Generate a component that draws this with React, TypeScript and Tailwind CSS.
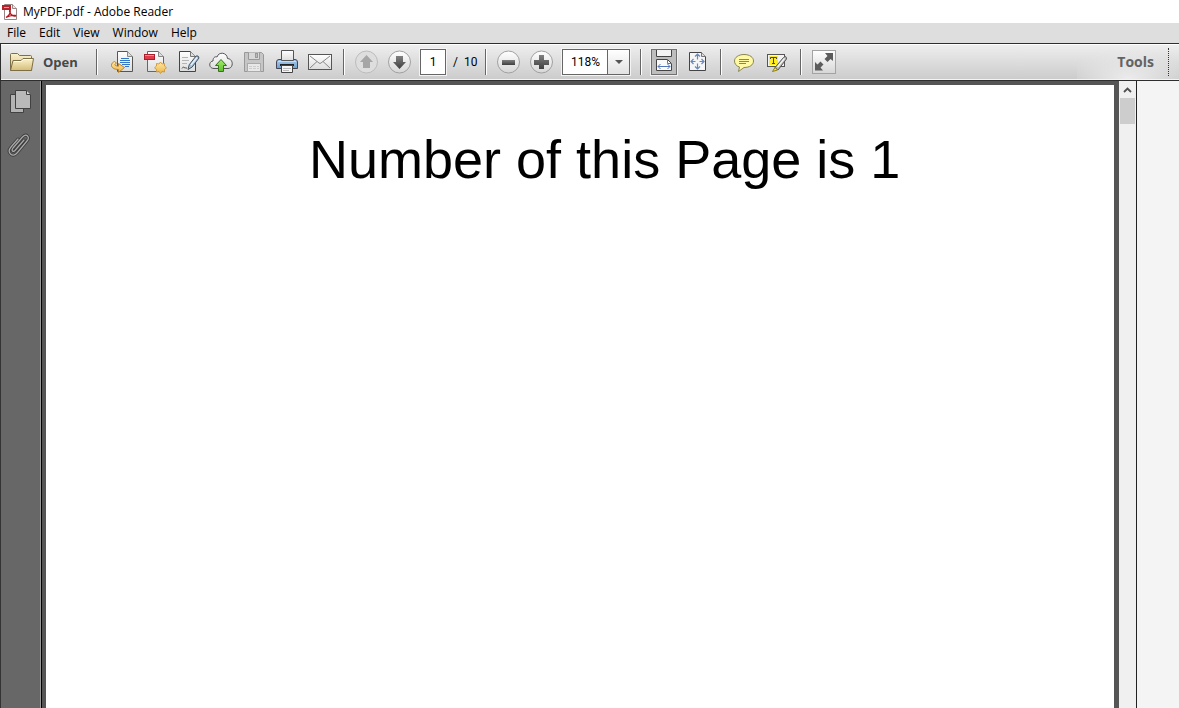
import type { ReactNode } from 'react';

function Svg({ children, size = 24 }: { children: ReactNode; size?: number }) {
  return (
    <svg width={size} height={size} viewBox={`0 0 ${size} ${size}`} fill="none" aria-hidden="true" className="shrink-0">
      {children}
    </svg>
  );
}

function Gradients() {
  return (
    <svg width="0" height="0" className="absolute" aria-hidden="true">
      <defs>
        <linearGradient id="paper" x1="0" y1="0" x2="0" y2="1">
          <stop offset="0" stopColor="#ffffff" />
          <stop offset="1" stopColor="#dcdcdc" />
        </linearGradient>
        <linearGradient id="folder" x1="0" y1="0" x2="0" y2="1">
          <stop offset="0" stopColor="#fbf2cd" />
          <stop offset="1" stopColor="#d5bd78" />
        </linearGradient>
        <linearGradient id="gold" x1="0" y1="0" x2="0" y2="1">
          <stop offset="0" stopColor="#ffe9a6" />
          <stop offset="1" stopColor="#ecb444" />
        </linearGradient>
        <linearGradient id="dark" x1="0" y1="0" x2="0" y2="1">
          <stop offset="0" stopColor="#808080" />
          <stop offset="1" stopColor="#3f3f3f" />
        </linearGradient>
        <linearGradient id="disc" x1="0" y1="0" x2="0" y2="1">
          <stop offset="0" stopColor="#ffffff" />
          <stop offset="1" stopColor="#d6d6d6" />
        </linearGradient>
        <linearGradient id="blue" x1="0" y1="0" x2="0" y2="1">
          <stop offset="0" stopColor="#a9cdee" />
          <stop offset="1" stopColor="#6f9fcd" />
        </linearGradient>
        <linearGradient id="green" x1="0" y1="0" x2="0" y2="1">
          <stop offset="0" stopColor="#a5ee6a" />
          <stop offset="1" stopColor="#5fbe32" />
        </linearGradient>
      </defs>
    </svg>
  );
}

const AppIcon = () => (
  <Svg size={16}>
    <path d="M2.500 .5H10.500L14.500 4.500V15.500H2.500Z" fill="#fff" stroke="#9a8585" />
    <path d="M10.500 .5V4.500H14.500" fill="#e8e8e8" stroke="#9a8585" />
    <rect x="0" y="1" width="9" height="5" fill="#b5222b" />
    <path d="M2 3.500H7" stroke="#e0a0a3" />
    <path d="M4 13.500C7 11.500 8.500 8.500 8.200 6.600C8 5.500 7 6.500 8 8.500C9 10.800 11 12.300 13.500 12C14.500 11.200 10 10.500 4 13.500Z" stroke="#b5161d" strokeWidth="1.300" />
  </Svg>
);

const FolderIcon = () => (
  <svg width="26" height="24" viewBox="0 0 26 24" fill="none" aria-hidden="true" className="shrink-0">
    <path d="M1.500 20.500V4.500Q1.500 3.500 2.500 3.500H8.500L10.500 5.500H21.500Q22.500 5.500 22.500 6.500V20.500Z" fill="url(#folder)" stroke="#7d7048" />
    <path d="M1.500 20.500L4 10.500H12L14 8.500H24.500L22.500 20.500Z" fill="url(#folder)" stroke="#7d7048" />
    <path d="M5 11.500H12.500L14.500 9.500H23" stroke="#fffbe6" />
  </svg>
);

const ConvertIcon = () => (
  <Svg>
    <path d="M7.500 1.500H17.500L22.500 6.500V21.500H7.500Z" fill="url(#paper)" stroke="#555" />
    <path d="M17.500 1.500V6.500H22.500" fill="#ddd" stroke="#888" />
    <path d="M11 8.500H19M10 10.500H20M10 12.500H20M12 14.500H20M15 16.500H19" stroke="#3576c4" />
    <path d="M4.500 11.500C-.5 13.500 .5 19.500 8.500 19.500V22.500L14.500 17.500L8.500 13.500V16.200C5 16 3.500 14.500 6.500 13Z" fill="url(#gold)" stroke="#b37c22" strokeWidth=".9" strokeLinejoin="round" />
  </Svg>
);

const CreateIcon = () => (
  <Svg>
    <path d="M4.500 1.500H15.500L20.500 6.500V21.500H4.500Z" fill="url(#paper)" stroke="#666" />
    <path d="M15.500 1.500V6.500H20.500" fill="#ddd" stroke="#888" />
    <rect x="1.500" y="4.500" width="10" height="5" fill="#e23a48" stroke="#a91c2b" />
    <path d="M2 5.500H11" stroke="#f48c93" />
    <path d="M17.500 12L19 14L21.500 13.500L21.500 16L23.500 17.800L21.500 19.500V22L19 21.600L17.500 23.500L16 21.600L13.500 22V19.500L11.500 17.800L13.500 16V13.500L16 14Z" fill="url(#gold)" stroke="#cf963a" strokeWidth=".9" strokeLinejoin="round" />
  </Svg>
);

const SignIcon = () => (
  <Svg>
    <path d="M3.500 1.500H14.500L19.500 6.500V21.500H3.500Z" fill="url(#paper)" stroke="#444" />
    <path d="M14.500 1.500V6.500H19.500" fill="#ddd" stroke="#777" />
    <path d="M6 7.500H12M6 10.500H13M6 13.500H11" stroke="#b5b5b5" />
    <path d="M6 18.500C7 16.500 8 16.500 8 18C9 17 9.500 18.500 11 18" stroke="#555" />
    <path d="M12 19.500L13.200 14.800L20 6Q22.500 5 23 8L16.200 17Z" fill="#a9c4dc" stroke="#45525f" strokeLinejoin="round" />
    <path d="M15 15L21 7.500" stroke="#e6f1fa" strokeWidth="1.300" />
  </Svg>
);

const CloudIcon = () => (
  <Svg>
    <path d="M5 18.500C-.5 18.500 -.5 11.500 4 11C4 6.500 7 6.500 8 7C9.500 1.500 18 2 18.500 8.500C25 9 24.500 18.500 19 18.500Z" fill="url(#paper)" stroke="#555" />
    <path d="M12 9.500L17.500 15.500H14.500V21.500H9.500V15.500H6.500Z" fill="url(#green)" stroke="#35751b" strokeLinejoin="round" />
  </Svg>
);

const SaveIcon = () => (
  <Svg>
    <path d="M2.500 2.500H19.500L21.500 4.500V21.500H2.500Z" fill="#c6c6c6" stroke="#999" />
    <path d="M6.500 2.500V9.500H17.500V2.500" fill="#d8d8d8" stroke="#999" />
    <rect x="13.500" y="3.500" width="2" height="4" fill="#bbb" stroke="#999" />
    <rect x="5.500" y="13.500" width="13" height="8" fill="#e8e8e8" stroke="#aaa" />
    <path d="M7 16.500H17M7 18.500H17" stroke="#ccc" strokeDasharray="3 1" />
  </Svg>
);

const PrintIcon = () => (
  <Svg>
    <path d="M1.500 18.500V12Q1.500 9.500 4 9.500H20Q22.500 9.500 22.500 12V18.500Z" fill="url(#blue)" stroke="#445" />
    <path d="M6.500 .5H18.500V10.500H6.500Z" fill="url(#paper)" stroke="#555" />
    <path d="M3 11.500H21" stroke="#c3def5" />
    <path d="M5 15H19" stroke="#222" strokeWidth="2" />
    <path d="M6.500 15.500H17.500V22.500H6.500Z" fill="#f5f5f5" stroke="#444" />
    <path d="M8 18.500H16M8 20.500H14" stroke="#bbb" />
  </Svg>
);

const MailIcon = () => (
  <Svg>
    <rect x=".5" y="4.500" width="23" height="15" fill="url(#paper)" stroke="#555" />
    <path d="M2 6L11 13Q12 14 13 13L22 6M2 18L9 11.500M22 18L15 11.500" stroke="#888" />
  </Svg>
);

const Disc = ({ children }: { children: ReactNode }) => (
  <Svg>
    <circle cx="11.500" cy="12" r="11" fill="url(#disc)" stroke="#a0a0a0" />
    {children}
  </Svg>
);

const UpIcon = () => (
  <Svg>
    <circle cx="11.500" cy="12" r="11" fill="#dedede" stroke="#bcbcbc" />
    <path d="M11.500 5L18 12H15V18H8V12H5Z" fill="#a6a6a6" />
  </Svg>
);

const FitWidthIcon = () => (
  <Svg>
    <path d="M4.500 0V6.500H19.500V0" fill="#f4f4f4" stroke="#444" />
    <path d="M4.500 20.500V9.500H15.500L19.500 13.500V20.500Z" fill="#fafafa" stroke="#444" />
    <path d="M15.500 9.500V13.500H19.500" stroke="#777" />
    <path d="M6 16.500H18M8.500 14L6 16.500L8.500 19M15.500 14L18 16.500L15.500 19" stroke="#5577b5" />
  </Svg>
);

const FitPageIcon = () => (
  <Svg>
    <path d="M3.500 2.500H15.500L19.500 6.500V20.500H3.500Z" fill="#f6f6f6" stroke="#444" />
    <path d="M15.500 2.500V6.500H19.500" fill="#ddd" stroke="#777" />
    <path d="M11.500 4V9.500M11.500 13.500V19M5 11.500H9.500M13.500 11.500H18M9 6.500L11.500 4L14 6.500M9 16.500L11.500 19L14 16.500M7.500 9L5 11.500L7.500 14M15.500 9L18 11.500L15.500 14" stroke="#6a88c0" strokeWidth="1.200" />
  </Svg>
);

const CommentIcon = () => (
  <Svg>
    <path d="M12 4.500C18 4.500 21.500 7.500 21.500 11C21.500 15 17.500 17.500 12 17.500L6.500 21.500L7.500 17C4 16 2.500 13.500 2.500 11C2.500 7.500 6.500 4.500 12 4.500Z" fill="#fff9a6" stroke="#8a8650" />
    <path d="M7 9.500H17M7 11.500H17M7 13.500H14" stroke="#8c874d" />
  </Svg>
);

const HighlightIcon = () => (
  <Svg>
    <rect x="2.500" y="4.500" width="17" height="12" fill="#f3f3f3" stroke="#555" />
    <rect x="4" y="6" width="9" height="9" fill="#ffed24" />
    <path d="M5.500 9V7.500H11.500V9M8.500 7.500V13.500M7 13.500H10" stroke="#444" />
    <path d="M10 17.500L18.500 7.500Q21.500 5 21.500 9L13 20Z" fill="#b9b9b5" stroke="#555" />
    <path d="M12.500 17L19.500 8.500" stroke="#f8f8f8" strokeWidth="1.200" />
    <path d="M7.500 21.500L10 17.500L12.500 20Z" fill="#ffed24" stroke="#8a7e20" />
  </Svg>
);

const FullScreenIcon = () => (
  <Svg>
    <rect x=".5" y=".5" width="23" height="23" fill="url(#disc)" stroke="#a3a3a3" />
    <path d="M13 3H21V11L18.500 9L15.500 12L12.500 9L15.500 6ZM3 12L5.500 14.500L8.500 11.500L11.500 14.500L8.500 17.500L11 20.500H3Z" fill="#5c5c5c" />
  </Svg>
);

function Tool({ label, children, disabled }: { label: string; children: ReactNode; disabled?: boolean }) {
  return (
    <button type="button" aria-label={label} disabled={disabled} className="flex h-[26px] w-[33px] shrink-0 items-center justify-center">
      {children}
    </button>
  );
}

const Separator = () => <span className="h-[26px] w-0.5 shrink-0 border-r border-l border-r-white border-l-[#666]" />;

export default function App() {
  return (
    <div className="flex h-screen flex-col overflow-hidden bg-[#505050] font-['Open_Sans',sans-serif] text-black">
      <Gradients />
      <header className="flex h-[23px] shrink-0 items-center gap-[5px] bg-white pl-0.5">
        <AppIcon />
        <h1 className="text-[12px] leading-4">MyPDF.pdf - Adobe Reader</h1>
      </header>

      <nav className="flex h-5 shrink-0 items-center gap-px bg-[#dedede] pl-px text-[12px] leading-4">
        {['File', 'Edit', 'View', 'Window', 'Help'].map((item) => (
          <button key={item} type="button" className="px-1.5">
            {item}
          </button>
        ))}
      </nav>

      <div className="flex h-[38px] shrink-0 items-center border-y border-l border-[#2e2e2e] bg-linear-to-b from-[#efefef] to-[#cbcbcb] shadow-[inset_0_1px_0_#fff,inset_0_-1px_0_#f4f4f4]">
        <button type="button" className="flex w-[95px] shrink-0 items-center gap-2 pl-2 text-[13px] leading-4 font-bold text-[#484848]">
          <FolderIcon />
          Open
        </button>
        <Separator />
        <div className="flex px-[7px]">
          <Tool label="Convert file"><ConvertIcon /></Tool>
          <Tool label="Create PDF"><CreateIcon /></Tool>
          <Tool label="Sign"><SignIcon /></Tool>
          <Tool label="Upload"><CloudIcon /></Tool>
          <Tool label="Save" disabled><SaveIcon /></Tool>
          <Tool label="Print"><PrintIcon /></Tool>
          <Tool label="Email"><MailIcon /></Tool>
        </div>
        <Separator />
        <div className="flex w-[140px] shrink-0 items-center pl-[5px] text-[12px]">
          <Tool label="Previous page" disabled><UpIcon /></Tool>
          <Tool label="Next page">
            <Disc>
              <path d="M8 6H15V12H18L11.500 19L5 12H8Z" fill="url(#dark)" />
            </Disc>
          </Tool>
          <input
            aria-label="Page number"
            defaultValue="1"
            className="mr-[7px] ml-1 h-[26px] w-[26px] shrink-0 border border-[#666] bg-white text-center font-[Roboto,sans-serif] outline outline-[#f4f4f4]"
          />
          <span className="font-[Roboto,sans-serif] whitespace-pre">/  10</span>
        </div>
        <Separator />
        <div className="flex w-[153px] shrink-0 items-center pl-[5px]">
          <Tool label="Zoom out">
            <Disc>
              <rect x="5" y="10" width="13" height="5" fill="url(#dark)" />
            </Disc>
          </Tool>
          <Tool label="Zoom in">
            <Disc>
              <path d="M9 5H14V10H19V15H14V19H9V15H4V10H9Z" fill="url(#dark)" />
            </Disc>
          </Tool>
          <div className="relative ml-1 h-[26px] w-[68px] shrink-0">
            <select
              aria-label="Zoom level"
              defaultValue="118%"
              className="block h-full w-full appearance-none border border-[#666] bg-white pl-2 font-[Roboto,sans-serif] text-[12px] outline outline-[#f4f4f4]"
            >
              <option>100%</option>
              <option>118%</option>
              <option>150%</option>
            </select>
            <span className="pointer-events-none absolute inset-y-px right-px flex w-[22px] items-center justify-center border-l border-[#666] bg-linear-to-b from-white to-[#e2e2e2]">
              <svg width="8" height="4" viewBox="0 0 8 4" aria-hidden="true">
                <path d="M0 0H8L4 4Z" fill="#555" />
              </svg>
            </span>
          </div>
        </div>
        <Separator />
        <div className="flex w-[78px] shrink-0 items-center gap-1 pl-[9px]">
          <button type="button" aria-label="Fit width" aria-pressed="true" className="flex size-[26px] shrink-0 items-center justify-center border border-[#707070] bg-[#bebebe] outline outline-[#f0f0f0]">
            <FitWidthIcon />
          </button>
          <Tool label="Fit page"><FitPageIcon /></Tool>
        </div>
        <Separator />
        <div className="flex w-[78px] shrink-0 items-center pl-[5px]">
          <Tool label="Comment"><CommentIcon /></Tool>
          <Tool label="Highlight text"><HighlightIcon /></Tool>
        </div>
        <Separator />
        <div className="pl-[5px]">
          <Tool label="Full screen"><FullScreenIcon /></Tool>
        </div>
        <div className="ml-auto flex h-[34px] items-center bg-[radial-gradient(ellipse_60px_30px_at_bottom,#ececec,transparent)] pr-2.5 pl-10">
          <button type="button" className="pr-3.5 text-[14px] leading-4 font-bold text-[#636363]">
            Tools
          </button>
          <span className="h-7 border-l border-dotted border-[#333]" />
        </div>
      </div>

      <div className="flex min-h-0 flex-1">
        <aside className="flex w-[42px] shrink-0 flex-col items-center gap-[19px] border-r border-l border-r-black border-l-[#333] bg-[#676767] pt-[9px] pr-[5px] shadow-[inset_-1px_0_0_#999]">
          <button type="button" aria-label="Page thumbnails">
            <Svg>
              <path d="M3.500 4.500H16.500V22.500H3.500Z" fill="#b3b3b3" stroke="#414141" />
              <path d="M8.500 .5H19.500L23.500 4.500V18.500H8.500Z" fill="#b9b9b9" stroke="#414141" />
              <path d="M19.500 .5V4.500H23.500" fill="#d6d6d6" stroke="#414141" />
            </Svg>
          </button>
          <button type="button" aria-label="Attachments">
            <Svg>
              <g strokeLinecap="round" strokeLinejoin="round">
                <path d="M17 7L8 17.500Q6.500 19 5.500 18T6 15L15.500 4Q18.500 1 20.500 3T20 8L10.500 19.500Q6.500 24 3.500 21T4 14L11 6" stroke="#3d3d3d" strokeWidth="3" />
                <path d="M17 7L8 17.500Q6.500 19 5.500 18T6 15L15.500 4Q18.500 1 20.500 3T20 8L10.500 19.500Q6.500 24 3.500 21T4 14L11 6" stroke="#aaa" strokeWidth="1.200" />
              </g>
            </Svg>
          </button>
        </aside>

        <main className="min-w-0 flex-1 bg-[#555] pt-1 pr-[5px] pl-1">
          <article className="h-full bg-white pt-[43px] pl-[263px]">
            <p className="font-['Liberation_Sans',Arial,sans-serif] text-[54px] leading-[62px] whitespace-nowrap">Number of this Page is 1</p>
          </article>
        </main>

        <div className="flex w-[18px] shrink-0 flex-col items-center border-r border-[#222] bg-[#f0f0f0]">
          <button type="button" aria-label="Scroll up" className="flex h-[17px] w-full shrink-0 items-center justify-center">
            <svg width="9" height="6" viewBox="0 0 9 6" fill="none" aria-hidden="true">
              <path d="M1 5L4.500 1.500L8 5" stroke="#505050" strokeWidth="1.800" />
            </svg>
          </button>
          <div className="h-[26px] w-[15px] bg-[#cdcdcd]" />
        </div>
        <div className="w-[42px] shrink-0 bg-[#f4f4f4]" />
      </div>
    </div>
  );
}
